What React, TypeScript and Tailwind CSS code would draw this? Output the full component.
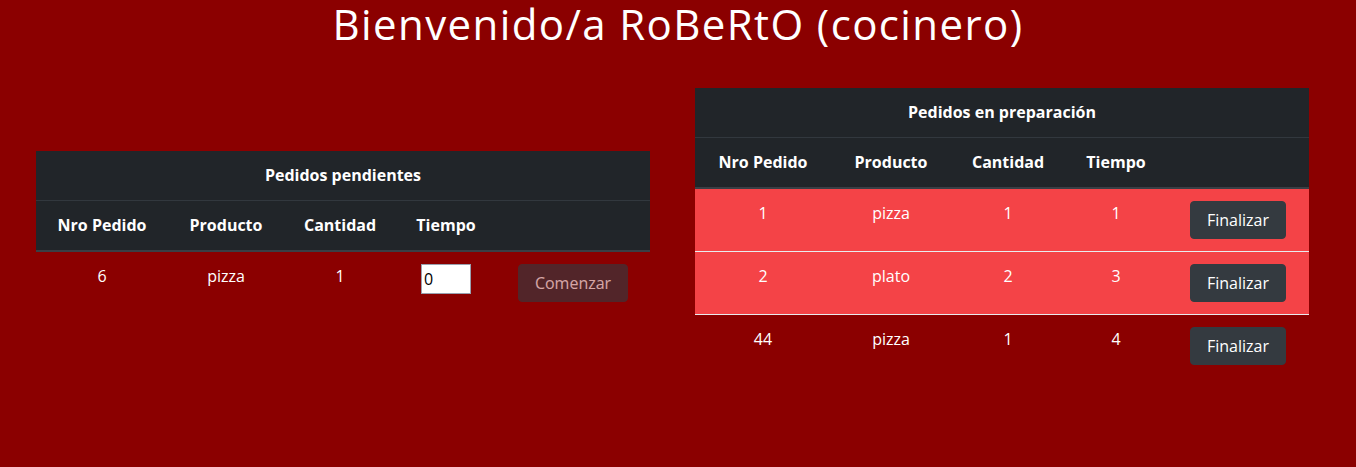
import React from 'react';

type Pedido = { nro: number; producto: string; cantidad: number; tiempo: number; urgente?: boolean };

const enPreparacion: Pedido[] = [
    { nro: 1, producto: 'pizza', cantidad: 1, tiempo: 1, urgente: true },
    { nro: 2, producto: 'plato', cantidad: 2, tiempo: 3, urgente: true },
    { nro: 44, producto: 'pizza', cantidad: 1, tiempo: 4 },
];

const th = 'px-3 pt-3 pb-[13px] text-center font-bold leading-6';
const td = 'px-3 py-3 text-center align-top leading-6';
const btn = 'rounded border border-[#343a40] bg-[#343a40] px-4 py-[6px] leading-6 text-white';

function Cabecera({ titulo }: { titulo: string }) {
    return (
        <thead className="bg-[#212529] text-white">
            <tr>
                <th colSpan={5} className={`${th} border-b border-[#32383e]`}>
                    {titulo}
                </th>
            </tr>
            <tr className="border-b-2 border-[#3a3f45]">
                <th className={th}>Nro Pedido</th>
                <th className={th}>Producto</th>
                <th className={th}>Cantidad</th>
                <th className={th}>Tiempo</th>
                <th className={th}></th>
            </tr>
        </thead>
    );
}

export default function App() {
    return (
        <div className="min-h-[467px] bg-[#8b0000] text-white font-['Open_Sans',sans-serif] text-base">
            <h1 className="text-center text-[42px] leading-[48px] font-normal tracking-[1.4px]">
                Bienvenido/a RoBeRtO (cocinero)
            </h1>

            <div className="mt-[40px] flex items-center gap-[45px] pl-[36px]">
                <table className="w-[614px] table-fixed border-collapse">
                    <colgroup>
                        <col className="w-[132px]" />
                        <col className="w-[116px]" />
                        <col className="w-[112px]" />
                        <col className="w-[100px]" />
                        <col className="w-[154px]" />
                    </colgroup>
                    <Cabecera titulo="Pedidos pendientes" />
                    <tbody>
                        <tr>
                            <td className={td}>6</td>
                            <td className={td}>pizza</td>
                            <td className={td}>1</td>
                            <td className={td}>
                                <input
                                    type="number"
                                    defaultValue={0}
                                    className="h-[30px] w-[50px] border border-gray-400 bg-white px-[2px] text-black leading-6"
                                />
                            </td>
                            <td className={td}>
                                <button disabled className={`${btn} opacity-65`}>
                                    Comenzar
                                </button>
                            </td>
                        </tr>
                    </tbody>
                </table>

                <table className="w-[614px] table-fixed border-collapse">
                    <colgroup>
                        <col className="w-[136px]" />
                        <col className="w-[120px]" />
                        <col className="w-[114px]" />
                        <col className="w-[102px]" />
                        <col className="w-[142px]" />
                    </colgroup>
                    <Cabecera titulo="Pedidos en preparación" />
                    <tbody>
                        {enPreparacion.map((p, i) => (
                            <tr
                                key={p.nro}
                                className={`${p.urgente ? 'bg-[#f44347]' : ''} ${i > 0 ? 'border-t border-[#e9ecef]' : ''}`}
                            >
                                <td className={td}>{p.nro}</td>
                                <td className={td}>{p.producto}</td>
                                <td className={td}>{p.cantidad}</td>
                                <td className={td}>{p.tiempo}</td>
                                <td className={td}>
                                    <button className={btn}>Finalizar</button>
                                </td>
                            </tr>
                        ))}
                    </tbody>
                </table>
            </div>
        </div>
    );
}
